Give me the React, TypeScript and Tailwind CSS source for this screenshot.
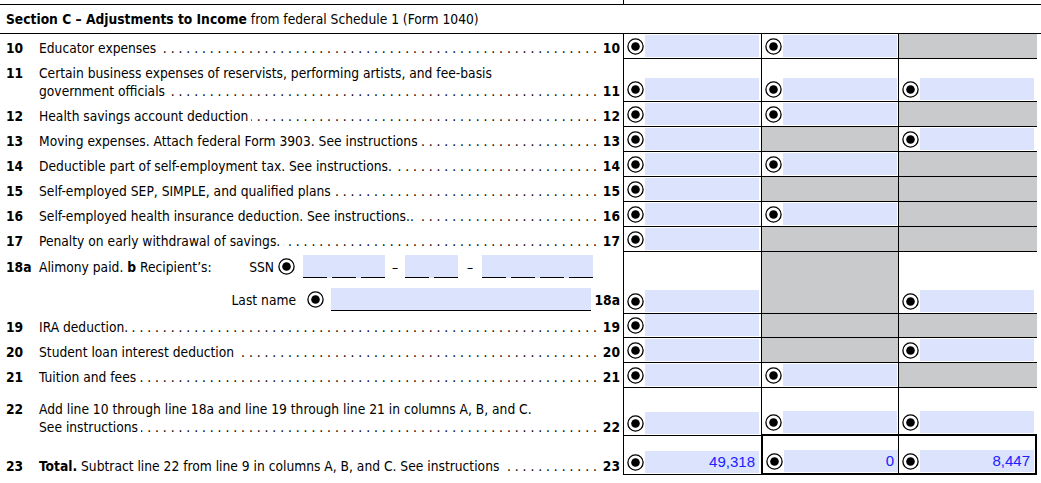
import React from "react";

const FIELD = "bg-[#dbe3fd]";
const GREY = "bg-[#c9cacc]";

type Kind = "r" | "g";

const ROWS: { n: string; lines: string[]; h: string; cells: Kind[] }[] = [
  { n: "10", lines: ["Educator expenses"], h: "h-[25px]", cells: ["r", "r", "g"] },
  {
    n: "11",
    lines: ["Certain business expenses of reservists, performing artists, and fee-basis", "government officials"],
    h: "h-[43px]",
    cells: ["r", "r", "r"],
  },
  { n: "12", lines: ["Health savings account deduction"], h: "h-[25px]", cells: ["r", "r", "g"] },
  { n: "13", lines: ["Moving expenses. Attach federal Form 3903. See instructions"], h: "h-[25px]", cells: ["r", "g", "r"] },
  { n: "14", lines: ["Deductible part of self-employment tax. See instructions."], h: "h-[25px]", cells: ["r", "r", "g"] },
  { n: "15", lines: ["Self-employed SEP, SIMPLE, and qualified plans"], h: "h-[25px]", cells: ["r", "g", "g"] },
  { n: "16", lines: ["Self-employed health insurance deduction. See instructions.."], h: "h-[25px]", cells: ["r", "r", "g"] },
  { n: "17", lines: ["Penalty on early withdrawal of savings."], h: "h-[25px]", cells: ["r", "g", "g"] },
];

const ROWS_B: { n: string; lines: string[]; h: string; cells: Kind[] }[] = [
  { n: "19", lines: ["IRA deduction."], h: "h-[24px]", cells: ["r", "g", "g"] },
  { n: "20", lines: ["Student loan interest deduction"], h: "h-[25px]", cells: ["r", "g", "r"] },
  { n: "21", lines: ["Tuition and fees"], h: "h-[25px]", cells: ["r", "r", "g"] },
];

const COL_W = ["w-[138px]", "w-[137px]", "w-[139px]"];

function Radio() {
  return (
    <svg width="17" height="17" viewBox="0 0 17 17" className="shrink-0">
      <circle cx="8.5" cy="8.5" r="7.6" fill="white" stroke="black" strokeWidth="1.3" />
      <circle cx="8.5" cy="8.5" r="4.3" fill="black" />
    </svg>
  );
}

function Leaders() {
  return (
    <span className="ml-[3px] flex min-w-0 flex-1 justify-end overflow-hidden whitespace-nowrap">
      <span>{". ".repeat(120)}</span>
    </span>
  );
}

function Field({ value }: { value?: string }) {
  return (
    <div className="flex h-full items-end pb-px pl-[3px]">
      <div className="flex h-[22px] w-[18px] items-center">
        <Radio />
      </div>
      <div className={`flex h-[22px] w-[114px] items-center justify-end pr-[4px] font-['Liberation_Sans',Arial,sans-serif] text-[15px] text-[#2020ff] ${FIELD}`}>
        {value}
      </div>
    </div>
  );
}

function Cell({ kind, col, extra = "", value }: { kind: Kind; col: number; extra?: string; value?: string }) {
  return (
    <div className={`h-full shrink-0 border-b border-l border-black ${COL_W[col]} ${extra}`}>
      {kind === "g" ? <div className={`h-full w-full ${GREY}`} /> : <Field value={value} />}
    </div>
  );
}

function Label({ n, lines, right, pb = "pb-[2px]" }: { n: string; lines: React.ReactNode[]; right: string; pb?: string }) {
  const last = lines.length - 1;
  return (
    <div className={`flex h-full w-[623px] shrink-0 items-end pl-[6px] pr-[3px] ${pb}`}>
      <div className="flex w-full items-start">
        <span className="w-[33px] shrink-0 font-bold leading-[18px]">{n}</span>
        <div className="flex min-w-0 flex-1 flex-col">
          {lines.slice(0, last).map((l, i) => (
            <div key={i} className="leading-[18px]">{l}</div>
          ))}
          <div className="flex leading-[18px]">
            <span className="shrink-0">{lines[last]}</span>
            <Leaders />
            <span className="ml-[6px] shrink-0 font-bold">{right}</span>
          </div>
        </div>
      </div>
    </div>
  );
}

function SsnGroup({ count }: { count: number }) {
  return (
    <div className={`flex h-[23px] items-end gap-[5px] ${FIELD}`}>
      {Array.from({ length: count }).map((_, i) => (
        <div key={i} className="h-full w-[24px] border-b border-black" />
      ))}
    </div>
  );
}

export default function App() {
  return (
    <div className="h-[483px] w-[1041px] overflow-hidden bg-white font-['DejaVu_Sans_Condensed','Liberation_Sans_Narrow',sans-serif] text-[13.7px] text-black">
      {/* top rule */}
      <div className="flex h-[5px] border-b border-black">
        <div className="h-full w-[624px] border-r border-black" />
      </div>

      {/* section header */}
      <div className="flex h-[29px] items-center border-b border-black pl-[6px]">
        <span className="font-bold">Section C – Adjustments to Income</span>
        <span className="ml-[4px]">from federal Schedule 1 (Form 1040)</span>
      </div>

      {ROWS.map((r) => (
        <div key={r.n} className={`flex ${r.h}`}>
          <Label n={r.n} lines={r.lines} right={r.n} />
          {r.cells.map((k, i) => (
            <Cell key={i} kind={k} col={i} />
          ))}
        </div>
      ))}

      {/* 18a alimony */}
      <div className="flex h-[62px]">
        <div className="flex h-full w-[623px] shrink-0 flex-col pl-[6px] pr-[3px]">
          <div className="mt-[3px] flex h-[23px] items-end">
            <span className="w-[33px] shrink-0 pb-[2px] font-bold leading-[18px]">18a</span>
            <span className="w-[201px] shrink-0 pb-[2px] leading-[18px]">
              Alimony paid. <b>b</b> Recipient’s:
            </span>
            <span className="w-[34px] pb-[2px] text-right leading-[18px]">SSN</span>
            <div className="ml-[4px] mr-[8px] flex h-[23px] items-center">
              <Radio />
            </div>
            <SsnGroup count={3} />
            <span className="w-[20px] pb-[2px] text-center leading-[18px]">–</span>
            <SsnGroup count={2} />
            <span className="w-[24px] pb-[2px] text-center leading-[18px]">–</span>
            <SsnGroup count={4} />
          </div>
          <div className="mt-[10px] flex h-[23px] items-end">
            <span className="w-[290px] shrink-0 pb-[2px] text-right leading-[18px]">Last name</span>
            <div className="ml-[11px] mr-[7px] flex h-[23px] items-center">
              <Radio />
            </div>
            <div className={`h-[23px] w-[260px] border-b border-black ${FIELD}`} />
            <span className="ml-auto pb-[2px] font-bold leading-[18px]">18a</span>
          </div>
        </div>
        <Cell kind="r" col={0} />
        <Cell kind="g" col={1} />
        <Cell kind="r" col={2} />
      </div>

      {ROWS_B.map((r) => (
        <div key={r.n} className={`flex ${r.h}`}>
          <Label n={r.n} lines={r.lines} right={r.n} />
          {r.cells.map((k, i) => (
            <Cell key={i} kind={k} col={i} />
          ))}
        </div>
      ))}

      {/* 22 */}
      <div className="flex h-[48px]">
        <Label
          n="22"
          lines={["Add line 10 through line 18a and line 19 through line 21 in columns A, B, and C.", "See instructions"]}
          right="22"
          pb="pb-0"
        />
        <Cell kind="r" col={0} />
        <Cell kind="r" col={1} extra="border-b-2" />
        <Cell kind="r" col={2} extra="border-b-2" />
      </div>

      {/* 23 total */}
      <div className="flex h-[39px]">
        <Label
          n="23"
          lines={[
            <span key="t">
              <b>Total.</b> Subtract line 22 from line 9 in columns A, B, and C. See instructions
            </span>,
          ]}
          right="23"
          pb="pb-0"
        />
        <Cell kind="r" col={0} value="49,318" />
        <Cell kind="r" col={1} extra="border-l-2 border-b-2" value="0" />
        <Cell kind="r" col={2} extra="border-r-2 border-b-2" value="8,447" />
      </div>
    </div>
  );
}
